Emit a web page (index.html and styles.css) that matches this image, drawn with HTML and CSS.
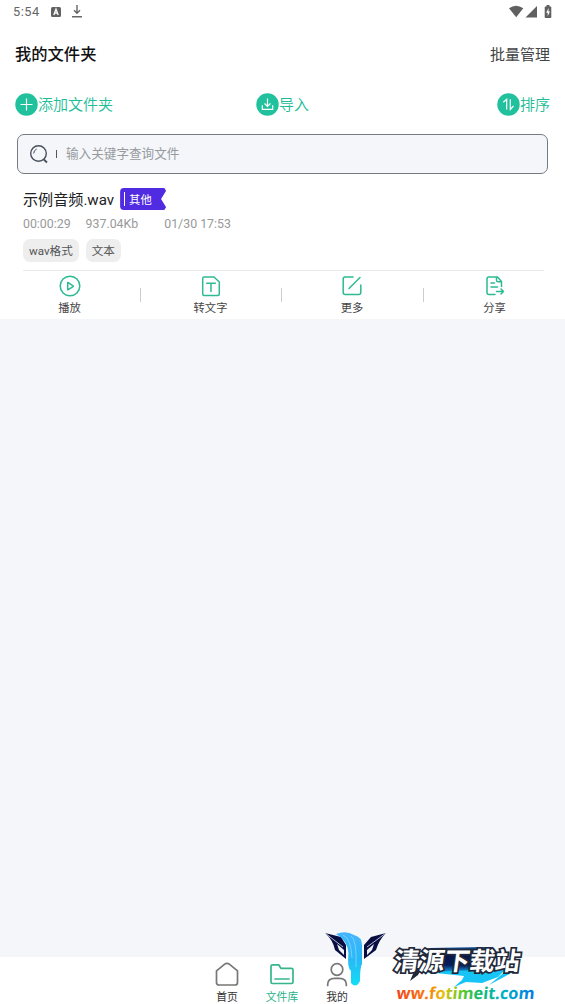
FILE: index.html
```html
<!DOCTYPE html>
<html lang="zh-CN">
<head>
<meta charset="utf-8">
<title>我的文件夹</title>
<link rel="stylesheet" href="styles.css">
</head>
<body>
<div class="app">
  <header class="top">
    <div class="status">
      <span class="clock">5:54</span>
      <svg class="status-app" width="10" height="10" viewBox="0 0 10 10"><rect width="10" height="10" rx="1.5" fill="#626262"/><path d="M2.8 8 5 2.2 7.2 8M3.6 6.2h2.8" fill="none" stroke="#fff" stroke-width="1.3"/></svg>
      <svg width="10" height="13" viewBox="0 0 10 13" fill="none" stroke="#666" stroke-width="1.4"><path d="M5 0v8M2 5.2l3 3 3-3M0 11.8h10"/></svg>
      <svg class="signals" width="43" height="14" viewBox="0 0 43 14" fill="#606060"><path d="M0 3.2Q7-1.8 14.3 3.2L7.2 12.2Z"/><path d="M28 1v11.5H16.5Z"/><path d="M36.5 1.5h1V0h3v1.5h1q.8 0 .8.8v10q0 .8-.8.8h-5q-.8 0-.8-.8v-10q0-.8.8-.8Z"/><path d="m39.5 3-2.3 4.7h1.5v3.5l2.3-4.7h-1.5Z" fill="#fff"/></svg>
    </div>
    <div class="titlebar"><h1>我的文件夹</h1><span class="manage">批量管理</span></div>
    <div class="toolbar">
      <div class="tool"><svg width="23" height="23" viewBox="0 0 23 23"><circle cx="11.5" cy="11.5" r="11.2" fill="#20c19c"/><path d="M11.5 5.5v12M5.5 11.5h12" stroke="#fff" stroke-width="1.2"/></svg><span>添加文件夹</span></div>
      <div class="tool"><svg width="23" height="23" viewBox="0 0 23 23"><circle cx="11.5" cy="11.5" r="11.2" fill="#20c19c"/><path d="M11.5 5.5v8M8.5 10.5l3 3 3-3M6.3 12.3v4h10.4v-4" fill="none" stroke="#fff" stroke-width="1.2"/></svg><span>导入</span></div>
      <div class="tool"><svg width="23" height="23" viewBox="0 0 23 23"><circle cx="11.5" cy="11.5" r="11.2" fill="#20c19c"/><path d="M6.3 9.3 9.7 6.3v10.2M13.3 6.3v10.2l3.2-3.5" fill="none" stroke="#fff" stroke-width="1.2"/></svg><span>排序</span></div>
    </div>
    <div class="search">
      <svg width="20" height="20" viewBox="0 0 20 20" fill="none" stroke="#48505c"><circle cx="9.5" cy="9.5" r="7.8" stroke-width="1.4"/><path d="M4.7 9.5a5 5 0 0 1 3-4.5" stroke-width="1"/><path d="m14.8 15.5 3.200 3" stroke-width="1.8"/></svg>
      <i class="caret"></i><span>输入关键字查询文件</span>
    </div>
    <section class="file">
      <div class="name"><span>示例音频.wav</span><span class="ribbon"><i></i>其他</span></div>
      <div class="meta"><span>00:00:29</span><span>937.04Kb</span><span class="date">01/30 17:53</span></div>
      <div class="tags"><span class="tag">wav格式</span><span class="tag">文本</span></div>
      <hr>
    </section>
    <div class="actions">
      <div class="action"><svg viewBox="0 0 22 22"><circle cx="11" cy="11" r="9.8"/><path d="M8.7 7.8v6.6q0 .6.6.2l4.7-3q.5-.4 0-.8L9.3 7.6q-.6-.4-.6.2Z"/></svg><span>播放</span></div>
      <div class="action"><svg viewBox="0 0 22 22"><path d="M4.2 2H14l5.3 5v12q0 1.5-1.5 1.5H4.2Q2.7 20.5 2.7 19V3.5Q2.7 2 4.2 2ZM6.7 8.2h8.600M11 8.2v8.3"/></svg><span>转文字</span></div>
      <div class="action"><svg viewBox="0 0 22 22"><path d="M12 2H4.2Q2.2 2 2.2 4v13.5q0 2 2 2h13.600q2 0 2-2V10M8 13.5 19 2.5"/></svg><span>更多</span></div>
      <div class="action"><svg viewBox="0 0 22 22"><path d="M11 19.5H5q-2 0-2-2V4q0-2 2-2h8.500l4 4.500v5M12.500 2v3.200q0 1.600 1.600 1.600h3.400M7 8h3.500M7 12h6.500M12.500 16.500h7M17 14l2.500 2.500L17 19"/></svg><span>分享</span></div>
    </div>
  </header>
  <main class="space"></main>
  <nav class="tabs">
    <div class="tab"><svg viewBox="0 0 26 26"><path d="M2.500 9.800 10.700 3.200q2.300-1.800 4.600 0l8.200 6.600v11.700q0 2.500-2.500 2.500H5q-2.500 0-2.500-2.500Z"/></svg><span>首页</span></div>
    <div class="tab active"><svg viewBox="0 0 26 26"><path d="M2 21V5.300q0-1.500 1.500-1.500h6.200l2.200 3.500h10.600q1.500 0 1.500 1.500V21q0 1.500-1.500 1.500h-19Q2 22.500 2 21ZM6 18h14"/></svg><span>文件库</span></div>
    <div class="tab"><svg viewBox="0 0 26 26"><circle cx="13" cy="8.500" r="5.800"/><path d="M3.700 24.500v-1.200q0-6 7-6h4.600q7 0 7 6v1.200"/></svg><span>我的</span></div>
  </nav>
  <svg class="watermark" width="220" height="79" viewBox="325 925 220 79">
    <defs>
      <linearGradient id="water" x2="0" y2="1"><stop stop-color="#45b5ff"/><stop offset=".5" stop-color="#28b8f5"/><stop offset="1" stop-color="#12def5"/></linearGradient>
      <linearGradient id="panel" x2="0" y2="1"><stop stop-color="#0a4f9a"/><stop offset=".3" stop-color="#071646"/><stop offset=".7" stop-color="#071c5c"/><stop offset="1" stop-color="#12b4f2"/></linearGradient>
      <linearGradient id="rainbow"><stop stop-color="#f0441f"/><stop offset=".22" stop-color="#fb7a10"/><stop offset=".34" stop-color="#e6c010"/><stop offset=".46" stop-color="#6ccb25"/><stop offset=".6" stop-color="#18b968"/><stop offset=".76" stop-color="#00b4c4"/><stop offset="1" stop-color="#0878e8"/></linearGradient>
    </defs>
    <path fill="#080d42" d="M325 933 341 937 346 945V959L335 950Q333 940 325 933ZM386 933 371 937 364 945V959L376 950Q379 940 386 933Z"/>
    <path d="M325 933 343 947M386 933 367 947" stroke="#dfe6ef" stroke-width=".8"/>
    <path d="M337 944 344 950V955L339 950ZM374 944 367 950V955L372 950Z" fill="#edf2f6"/>
    <path fill="url(#water)" d="M336 934Q346 930 354 935Q362 937 362 945V964Q360 967 360 981Q356 989 351 983V971Q347 968 348.5 953Q348 941 336 934Z"/>
    <path d="M343 935Q351 938 352 958M351 936Q357 940 356 967" fill="none" stroke="#9ce4ff" stroke-width=".6"/>
    <path fill="#20283a" d="M414 968h8l-4 7-8 6 3-7Z"/>
    <path fill="url(#panel)" d="M430 948 486 947 494 971 420 973Z"/>
    <path fill="#16c5f6" d="M426 972 506 969 498 977 482 983 466 982 454 987 462 980 464 976ZM507 970 517 970 489 985Z"/>
    <text class="brand" transform="translate(393 970) skewX(-8)" textLength="126" lengthAdjust="spacingAndGlyphs">清源下载站</text>
    <text class="url" transform="translate(396 999) skewX(-6)" textLength="138" lengthAdjust="spacingAndGlyphs">ww.fotimeit.com</text>
  </svg>
</div>
</body>
</html>
```
FILE: styles.css
```css
* { box-sizing: border-box; }
body { margin: 0; font-family: Roboto, "Noto Sans CJK SC", sans-serif; color: #202124; }
svg { display: block; flex: none; }
.app { position: relative; width: 565px; height: 1004px; display: flex; flex-direction: column; background: #f4f6f9; overflow: hidden; }
.top { height: 319px; background: #fff; flex: none; }
.status { height: 23px; padding: 0 13px 0 13px; display: flex; align-items: center; color: #666; font-size: 12.8px; letter-spacing: .5px; }
.status-app { margin: 0 11px 0 11px; }
.signals { margin-left: auto; }
.titlebar { height: 60px; padding: 0 15px; display: flex; align-items: center; justify-content: space-between; }
.titlebar h1 { margin: 0; font-size: 16.3px; font-weight: 500; color: #111; }
.manage { font-size: 15px; color: #444; }
.toolbar { height: 42px; padding: 0 15px; display: grid; grid-template-columns: 241px 1fr auto; align-items: center; }
.tool { display: flex; align-items: center; color: #20bd97; font-size: 15px; font-weight: 350; }
.tool span { padding-bottom: 2px; }
.search { height: 40px; margin: 9px 17px 0; padding: 0 11px; display: flex; align-items: center; background: #f4f6f9; border: 1px solid #767b82; border-radius: 7px; color: #969a9f; font-size: 12.6px; }
.search span { padding-bottom: 3px; }
.caret { width: 1px; height: 8px; margin: 0 9px 0 7px; background: #555; }
.file { height: 97px; padding: 12px 21px 0 23px; }
.name { height: 26px; display: flex; align-items: center; gap: 6px; font-size: 15.1px; }
.name > span:first-child { padding-bottom: 3px; }
.ribbon { width: 46px; height: 22px; display: flex; align-items: center; gap: 4px; padding: 0 4px; border-radius: 4px 0 0 4px; background: #512be2; color: #fff; font-size: 11.3px; clip-path: polygon(0 0, 96% 0, 100% 12%, 89% 50%, 100% 88%, 96% 100%, 0 100%); }
.ribbon i { width: 1px; height: 14px; background: #fff; }
.meta { height: 23px; display: flex; align-items: center; color: #999; font-size: 12.35px; }
.meta span + span { margin-left: 15px; }
.meta .date { margin-left: 26px; }
.tags { height: 32px; padding-top: 4px; display: flex; gap: 7px; }
.tag { height: 23px; padding: 0 6px; border-radius: 7px; background: #eee; color: #555; font-size: 11.6px; line-height: 25px; }
hr { margin: 3px 0 0; border: 0; border-top: 1px solid #e9e9e9; }
.actions { height: 48px; padding-top: 4px; display: grid; grid-template-columns: 141px 141px 142px 1fr; }
.action { height: 44px; padding-right: 2px; display: flex; flex-direction: column; align-items: center; color: #444; font-size: 11.3px; line-height: 16px; background: linear-gradient(#ccc, #ccc) right 13px / 1px 14px no-repeat; }
.action:last-child { background: none; padding: 0; }
.action svg { width: 22px; height: 22px; margin-bottom: 4px; fill: none; stroke: #2dba92; stroke-width: 1.5; stroke-linejoin: round; stroke-linecap: round; }
.space { flex: 1; }
.tabs { height: 47px; padding: 4px 1px 0 0; background: #fff; display: grid; grid-template-columns: repeat(3, 55px); justify-content: center; }
.tab { display: flex; flex-direction: column; align-items: center; font-size: 10.8px; line-height: 16px; color: #333; }
.tab svg { width: 26px; height: 26px; margin-bottom: 3px; fill: none; stroke: #777; stroke-width: 1.7; stroke-linecap: round; stroke-linejoin: round; }
.tab.active { color: #27b38b; }
.tab.active svg { stroke: #35b58e; }
.watermark { position: absolute; left: 325px; top: 925px; }
.brand { font: 700 25px "Noto Sans CJK SC", sans-serif; fill: #fff; stroke: #20283a; stroke-width: 3.5px; paint-order: stroke; }
.url { font: 700 16.5px "Open Sans", sans-serif; fill: url(#rainbow); }
```
